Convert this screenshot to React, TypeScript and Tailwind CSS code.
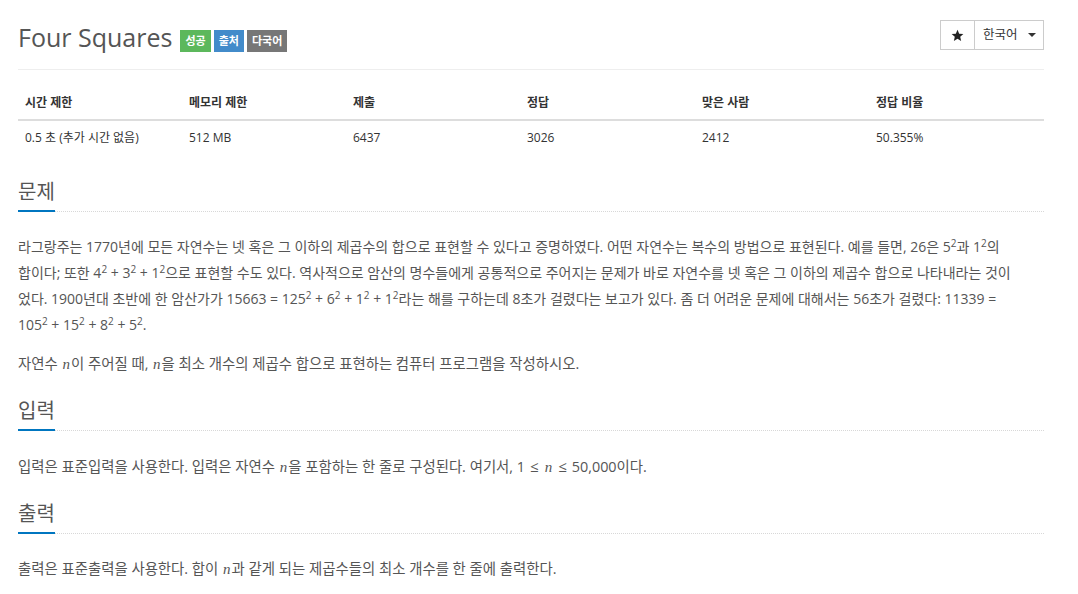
import React from 'react';

const font = { fontFamily: '"Open Sans", "Noto Sans CJK KR", sans-serif' };

const stats = [
  { label: '시간 제한', value: '0.5 초 (추가 시간 없음)', w: 'w-[164px]' },
  { label: '메모리 제한', value: '512 MB', w: 'w-[164px]' },
  { label: '제출', value: '6437', w: 'w-[174px]' },
  { label: '정답', value: '3026', w: 'w-[175px]' },
  { label: '맞은 사람', value: '2412', w: 'w-[174px]' },
  { label: '정답 비율', value: '50.355%', w: '' },
];

const Sq = ({ b }: { b: string }) => (
  <>
    {b}
    <sup className="text-[10px]">2</sup>
  </>
);

const N = () => <i className="font-['Liberation_Serif'] text-[15px] px-[1px]">n</i>;
const Le = () => <span className="px-[5px] text-[15px]">≤</span>;

const SectionTitle = ({ children, first }: { children: React.ReactNode; first?: boolean }) => (
  <div className={`border-b border-dotted border-[#d8d8d8] ${first ? 'mt-[24px]' : 'mt-[20px]'}`}>
    <h2 className="inline-block text-[20px] leading-[28px] pb-[4px] border-b-2 border-[#0076c0] -mb-px text-[#555]">
      {children}
    </h2>
  </div>
);

const App: React.FC = () => {
  return (
    <div className="bg-white min-h-[594px] text-[#555]" style={font}>
      <div className="ml-[18px] w-[1026px] pt-[20px]">
        <div className="flex justify-between items-start border-b border-[#eee] h-[50px]">
          <div className="flex items-center h-[34px]">
            <h1 className="text-[25px] leading-[34px] text-[#555] font-normal">Four Squares</h1>
            <div className="flex gap-[3px] ml-[8px] mt-[8px] text-[11px] font-bold text-white">
              <span className="h-[22px] px-[5px] flex items-center bg-[#5cb85c]">성공</span>
              <span className="h-[22px] px-[5px] flex items-center bg-[#428bca]">출처</span>
              <span className="h-[22px] px-[5px] flex items-center bg-[#777]">다국어</span>
            </div>
          </div>
          <div className="flex h-[30px] border border-[#ccc] text-[12.5px] text-[#333]">
            <button className="w-[34px] flex items-center justify-center border-r border-[#ccc]">
              <svg width="13" height="13" viewBox="0 0 24 24" fill="#222">
                <path d="M12 1.5l3.1 7.1 7.7.7-5.8 5.1 1.7 7.6L12 18l-6.7 4 1.7-7.6-5.8-5.1 7.7-.7z" />
              </svg>
            </button>
            <button className="w-[68px] flex items-center pl-[8px]">
              한국어
              <span className="ml-[10px] w-0 h-0 border-l-[4px] border-r-[4px] border-t-[4px] border-l-transparent border-r-transparent border-t-[#333]" />
            </button>
          </div>
        </div>

        <table className="mt-[16px] w-full text-[12px] border-collapse">
          <thead>
            <tr className="border-b-2 border-[#ddd]">
              {stats.map((s) => (
                <th key={s.label} className={`${s.w} text-left font-bold text-[#333] px-[7px] py-[8px] leading-[17px]`}>
                  {s.label}
                </th>
              ))}
            </tr>
          </thead>
          <tbody>
            <tr>
              {stats.map((s) => (
                <td key={s.label} className="px-[7px] py-[8px] leading-[17px] text-[#333]">
                  {s.value}
                </td>
              ))}
            </tr>
          </tbody>
        </table>

        <SectionTitle first>문제</SectionTitle>
        <div className="text-[14px] leading-[26px] mt-[22px]">
          <p className="whitespace-nowrap">
            <span className="block">
              라그랑주는 1770년에 모든 자연수는 넷 혹은 그 이하의 제곱수의 합으로 표현할 수 있다고 증명하였다. 어떤 자연수는 복수의 방법으로 표현된다. 예를 들면, 26은 <Sq b="5" />과 <Sq b="1" />의
            </span>
            <span className="block">
              합이다; 또한 <Sq b="4" /> + <Sq b="3" /> + <Sq b="1" />으로 표현할 수도 있다. 역사적으로 암산의 명수들에게 공통적으로 주어지는 문제가 바로 자연수를 넷 혹은 그 이하의 제곱수 합으로 나타내라는 것이
            </span>
            <span className="block">
              었다. 1900년대 초반에 한 암산가가 15663 = <Sq b="125" /> + <Sq b="6" /> + <Sq b="1" /> + <Sq b="1" />라는 해를 구하는데 8초가 걸렸다는 보고가 있다. 좀 더 어려운 문제에 대해서는 56초가 걸렸다: 11339 =
            </span>
            <span className="block">
              <Sq b="105" /> + <Sq b="15" /> + <Sq b="8" /> + <Sq b="5" />.
            </span>
          </p>
          <p className="mt-[13px] text-[14.4px]">
            자연수 <N />이 주어질 때, <N />을 최소 개수의 제곱수 합으로 표현하는 컴퓨터 프로그램을 작성하시오.
          </p>
        </div>

        <SectionTitle>입력</SectionTitle>
        <p className="text-[14.4px] leading-[26px] mt-[22px]">
          입력은 표준입력을 사용한다. 입력은 자연수 <N />을 포함하는 한 줄로 구성된다. 여기서, 1<Le /><N /><Le />50,000이다.
        </p>

        <SectionTitle>출력</SectionTitle>
        <p className="text-[14.4px] leading-[26px] mt-[22px]">
          출력은 표준출력을 사용한다. 합이 <N />과 같게 되는 제곱수들의 최소 개수를 한 줄에 출력한다.
        </p>
      </div>
    </div>
  );
};

export default App;
